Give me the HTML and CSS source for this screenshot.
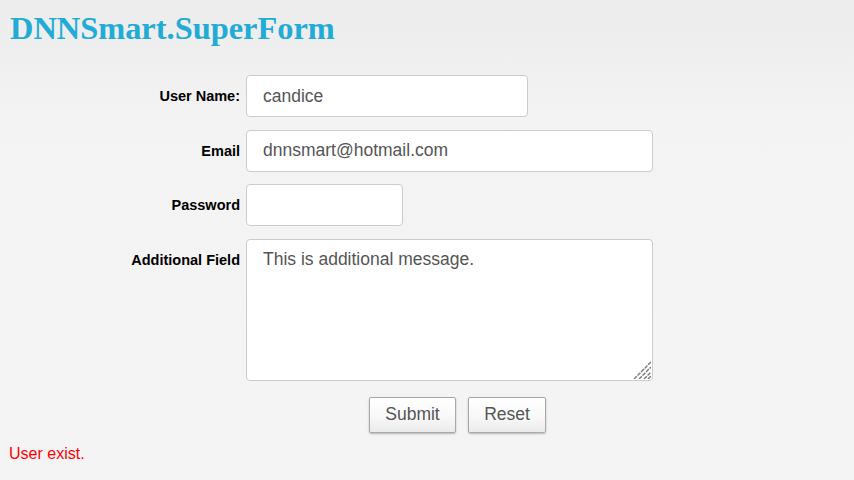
FILE: index.html
```html
<!DOCTYPE html>
<html>
<head>
<meta charset="utf-8">
<link rel="stylesheet" href="styles.css">
</head>
<body>
<div class="page">
  <h1 class="title">DNNSmart.SuperForm</h1>
  <form class="form">
    <div class="row">
      <label class="label">User Name:</label>
      <input class="field w-user" type="text" value="candice">
    </div>
    <div class="row">
      <label class="label">Email</label>
      <input class="field w-wide" type="text" value="dnnsmart@hotmail.com">
    </div>
    <div class="row">
      <label class="label">Password</label>
      <input class="field w-pass" type="password" value="">
    </div>
    <div class="row">
      <label class="label">Additional Field</label>
      <div class="area-wrap">
        <textarea class="field area w-wide">This is additional message.</textarea>
        <svg class="grip" width="18" height="18" viewBox="0 0 18 18">
          <g stroke="#7a7a7a" stroke-width="1.4" stroke-dasharray="4 1">
            <line x1="1" y1="18" x2="18" y2="1"/>
            <line x1="6" y1="18" x2="18" y2="6"/>
            <line x1="11" y1="18" x2="18" y2="11"/>
            <line x1="15" y1="18" x2="18" y2="15"/>
          </g>
        </svg>
      </div>
    </div>
    <div class="actions">
      <button type="button" class="btn btn-submit">Submit</button>
      <button type="button" class="btn btn-reset">Reset</button>
    </div>
  </form>
  <div class="message">User exist.</div>
</div>
</body>
</html>
```
FILE: styles.css
```css
html, body {
  margin: 0;
  padding: 0;
  height: 100%;
}
body {
  background: linear-gradient(to bottom, #ececec 0px, #f3f3f3 120px, #f4f4f4 100%);
  font-family: "Liberation Sans", Arial, sans-serif;
}
.page {
  padding: 10px 0 0 0;
}
.title {
  margin: 0 0 0 10px;
  font-family: "Liberation Serif", "Times New Roman", serif;
  font-weight: bold;
  font-size: 32.4px;
  line-height: 36px;
  color: #22acd5;
}
.form {
  display: flex;
  flex-direction: column;
  gap: 12.67px;
  margin-top: 29px;
}
.row {
  display: flex;
  align-items: flex-start;
  gap: 6px;
}
.label {
  width: 240px;
  text-align: right;
  font-weight: bold;
  font-size: 14.5px;
  line-height: 42px;
  color: #000;
}
.field {
  box-sizing: border-box;
  height: 42px;
  margin: 0;
  border: 1px solid #cccccc;
  border-radius: 4px;
  background: #fff;
  padding: 0 16px;
  font-family: "Liberation Sans", Arial, sans-serif;
  font-size: 17.5px;
  color: #555;
  outline: none;
}
.w-user { width: 282px; }
.w-wide { width: 407px; }
.w-pass { width: 157px; }
.area-wrap {
  position: relative;
  display: flex;
}
.area {
  height: 142px;
  padding: 8px 16px;
  line-height: 22px;
  resize: none;
}
.grip {
  position: absolute;
  right: 2px;
  bottom: 2px;
}
.actions {
  display: flex;
  gap: 12px;
  padding-left: 369px;
  margin-top: 3.33px;
}
.btn {
  box-sizing: border-box;
  height: 36px;
  margin: 0;
  border: 1px solid #a9a9a9;
  border-radius: 2px;
  background: linear-gradient(to bottom, #ffffff 0%, #f8f8f8 55%, #ebebeb 100%);
  box-shadow: 0 1px 2px rgba(0,0,0,0.25);
  font-family: "Liberation Sans", Arial, sans-serif;
  font-size: 17.5px;
  color: #555;
  padding: 0;
}
.btn-submit { width: 87px; }
.btn-reset { width: 78px; }
.message {
  margin: 11px 0 0 9px;
  font-size: 16px;
  line-height: 20px;
  color: #ff0000;
}
```
